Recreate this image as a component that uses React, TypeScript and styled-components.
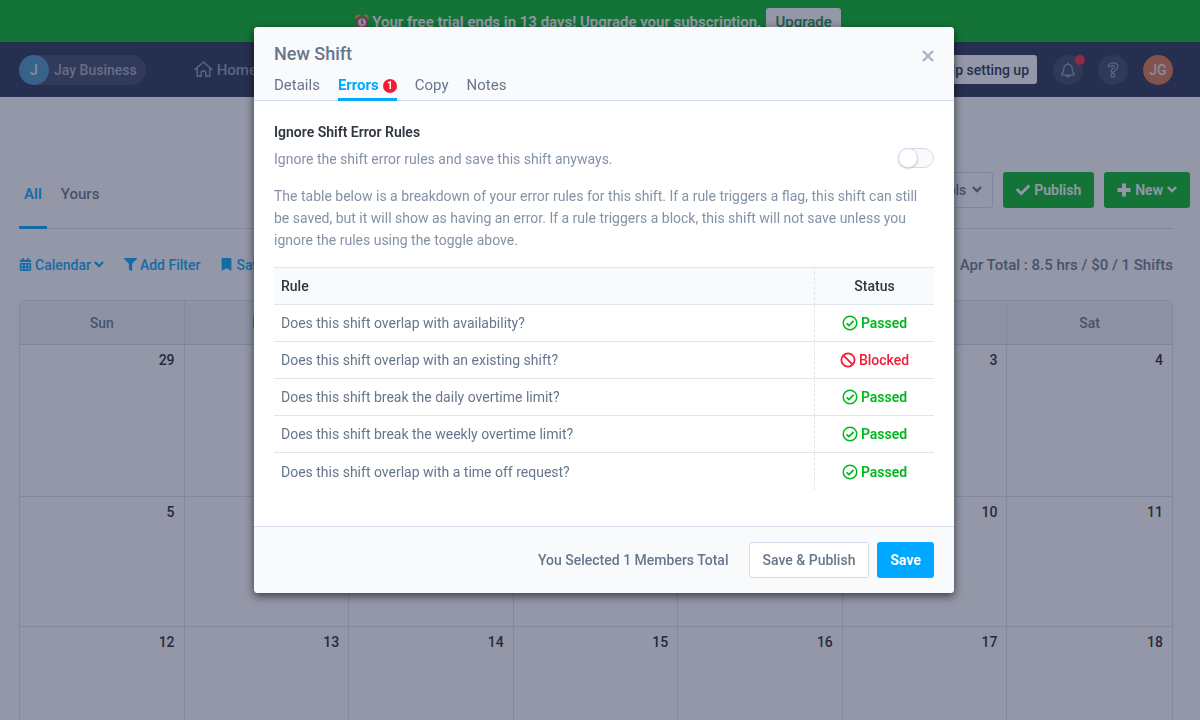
import React from "react";
import styled, { createGlobalStyle, css } from "styled-components";
import { FaBookmark, FaCalendarAlt, FaCheck, FaFilter } from "react-icons/fa";

const color = {
  green: "#00b81e",
  navy: "#252e4f",
  blue: "#00a8ff",
  red: "#f41c34",
  slate: "#67768c",
  ink: "#2f3640",
  muted: "#8492a6",
  line: "#d3dce9",
};

const GlobalStyle = createGlobalStyle`
  *, *::before, *::after { box-sizing: border-box; }
  body {
    margin: 0;
    background: #fff;
    color: ${color.slate};
    font-family: Roboto, "Liberation Sans", sans-serif;
    font-size: 14px;
    line-height: 22px;
  }
  button, input { font: inherit; color: inherit; }
  button { cursor: pointer; }
  a { color: inherit; text-decoration: none; }
  svg { flex: none; }
`;

const Screen = styled.div`
  display: flex;
  flex-direction: column;
  height: 100vh;
  overflow: hidden;
`;

/* ---------- Banner ---------- */

const Banner = styled.div`
  display: flex;
  flex: none;
  align-items: center;
  justify-content: center;
  gap: 5px;
  height: 42px;
  padding: 2px 4px 0 0;
  background: ${color.green};
  color: #fff;
  font-size: 15px;
  font-weight: 600;
`;

const BannerMessage = styled.span`
  display: flex;
  align-items: center;
  gap: 3px;
`;

const UpgradeButton = styled.button`
  height: 28px;
  padding: 0 9px;
  border: 0;
  border-radius: 3px;
  background: #fff;
  color: #0f8a3c;
  font-weight: 500;
`;

/* ---------- Navigation ---------- */

const NavBar = styled.header`
  display: flex;
  flex: none;
  align-items: center;
  height: 55px;
  padding: 0 27px 0 19px;
  background: ${color.navy};
`;

const Workspace = styled.a`
  display: flex;
  align-items: center;
  gap: 5px;
  height: 30px;
  margin-right: 48px;
  padding-right: 9px;
  border-radius: 15px;
  background: #3c4566;
  color: #a3aabd;
  font-weight: 500;
`;

const Avatar = styled.span<{ $tone: string }>`
  display: flex;
  align-items: center;
  justify-content: center;
  width: 30px;
  height: 30px;
  border-radius: 50%;
  background: ${(p) => p.$tone};
  color: #e3e7f0;
  font-size: 14px;
  font-weight: 500;
`;

const NavLink = styled.a`
  display: flex;
  align-items: center;
  gap: 4px;
  color: #8f9ab5;
  font-size: 15px;
  font-weight: 500;
`;

const NavActions = styled.div`
  display: flex;
  align-items: center;
  gap: 15px;
  margin-left: auto;
`;

const HelpButton = styled.button`
  height: 29px;
  margin-right: 1px;
  padding: 0 8px;
  border: 0;
  border-radius: 3px;
  background: #fff;
  color: ${color.navy};
  font-weight: 500;
`;

const RoundButton = styled.button`
  position: relative;
  display: flex;
  align-items: center;
  justify-content: center;
  width: 30px;
  height: 30px;
  padding: 0;
  border: 0;
  border-radius: 50%;
  background: #3a4363;
  color: #8f9ab5;
`;

const AlertDot = styled.span`
  position: absolute;
  top: 0;
  right: -2px;
  width: 10px;
  height: 10px;
  border-radius: 50%;
  background: #f5263f;
`;

/* ---------- Schedule page ---------- */

const Page = styled.main`
  flex: 1;
  min-height: 0;
  padding: 75px 27px 0 19px;
  overflow: hidden;
`;

const TabRow = styled.div`
  display: flex;
  justify-content: space-between;
  height: 57px;
  border-bottom: 1px solid #dbe2ed;
`;

const PageTabs = styled.nav`
  display: flex;
  gap: 9px;
`;

const PageTab = styled.a<{ $active?: boolean }>`
  height: 57px;
  padding: 11px 5px 0;
  border-bottom: 3px solid ${(p) => (p.$active ? color.blue : "transparent")};
  color: ${(p) => (p.$active ? color.blue : color.slate)};
  font-size: 15px;
  font-weight: ${(p) => (p.$active ? 600 : 500)};
`;

const PageActions = styled.div`
  display: flex;
  gap: 10px;
  margin-right: -17px;
`;

const Button = styled.button<{ $kind?: "primary" | "success" | "plain" }>`
  display: flex;
  align-items: center;
  gap: 4px;
  height: 36px;
  padding: 0 13px;
  border: 0;
  border-radius: 3px;
  font-weight: 500;
  ${(p) =>
    p.$kind === "primary"
      ? css`
          background: ${color.blue};
          color: #fff;
          font-weight: 700;
        `
      : p.$kind === "success"
        ? css`
            background: ${color.green};
            color: #fff;
            font-weight: 600;
          `
        : css`
            border: 1px solid ${color.line};
            background: #fff;
          `}
`;

const MenuButton = styled(Button)`
  gap: 6px;
  padding: 0 10px;
`;

const FilterRow = styled.div`
  display: flex;
  align-items: center;
  justify-content: space-between;
  height: 71px;
`;

const Filters = styled.div`
  display: flex;
  gap: 20px;
`;

const FilterButton = styled.button`
  display: flex;
  align-items: center;
  gap: 3px;
  padding: 0;
  border: 0;
  background: none;
  color: ${color.blue};
  font-weight: 500;
`;

const Total = styled.span`
  font-size: 15px;
  font-weight: 500;
`;

const Calendar = styled.table`
  width: 100%;
  table-layout: fixed;
  border-collapse: separate;
  border-spacing: 0;
  border: 1px solid #dbe2ed;
  border-radius: 4px;
  overflow: hidden;
`;

const DayHead = styled.th`
  height: 44px;
  padding: 0;
  border-bottom: 1px solid #d3dbe6;
  background: #f3f7f9;
  font-weight: 500;
  &:not(:last-child) {
    border-right: 1px solid #dbe2ed;
  }
`;

const DayCell = styled.td<{ $tall?: boolean }>`
  height: ${(p) => (p.$tall ? 152 : 130)}px;
  padding: 4px 9px;
  border-bottom: 1px solid #dbe2ed;
  color: #1f2530;
  font-weight: 500;
  text-align: right;
  vertical-align: top;
  &:not(:last-child) {
    border-right: 1px solid #dbe2ed;
  }
`;

/* ---------- Modal ---------- */

const Overlay = styled.div`
  position: fixed;
  inset: 0;
  display: flex;
  align-items: flex-start;
  justify-content: center;
  padding: 27px 0 27px 8px;
  background: rgba(39, 47, 80, 0.5);
`;

const Modal = styled.section`
  width: 100%;
  max-width: 700px;
  border-radius: 4px;
  background: #fff;
  box-shadow: 0 3px 10px rgba(0, 0, 0, 0.6);
  overflow: hidden;
`;

const ModalHeader = styled.header`
  padding: 14px 20px 0;
  border-bottom: 1px solid ${color.line};
  background: #f9fafc;
`;

const TitleRow = styled.div`
  display: flex;
  align-items: center;
  justify-content: space-between;
  height: 26px;
`;

const Title = styled.h2`
  margin: 0;
  font-size: 18px;
  font-weight: 500;
`;

const CloseButton = styled.button`
  display: flex;
  padding: 4px 0 0;
  border: 0;
  background: none;
  color: #abb4c4;
`;

const ModalTabs = styled.nav`
  display: flex;
  gap: 18px;
  margin-bottom: -1px;
`;

const ModalTab = styled.a<{ $active?: boolean }>`
  display: flex;
  gap: 4px;
  height: 34px;
  padding-top: 7px;
  border-bottom: 3px solid ${(p) => (p.$active ? color.blue : "transparent")};
  color: ${(p) => (p.$active ? color.blue : color.slate)};
  font-size: 15px;
  font-weight: ${(p) => (p.$active ? 700 : 400)};
`;

const Count = styled.span`
  width: 14px;
  height: 14px;
  margin-top: 5px;
  border-radius: 50%;
  background: ${color.red};
  color: #fff;
  font-size: 10px;
  line-height: 14px;
  text-align: center;
`;

const ModalBody = styled.div`
  padding: 20px 20px 36px;
`;

const Setting = styled.div`
  display: flex;
  align-items: flex-end;
  justify-content: space-between;
  margin-bottom: 15px;
`;

const SettingTitle = styled.h3`
  margin: 0 0 5px;
  color: ${color.ink};
  font-size: 14px;
  font-weight: 600;
  line-height: 22px;
`;

const HelpText = styled.p`
  margin: 0;
  color: ${color.muted};
`;

const Switch = styled.input`
  appearance: none;
  display: flex;
  width: 36px;
  height: 20px;
  margin: 0 0 2px;
  border: 1px solid ${color.line};
  border-radius: 10px;
  background: #fafafa;
  cursor: pointer;
  &::before {
    content: "";
    width: 20px;
    height: 20px;
    margin: -1px;
    border: 1px solid ${color.line};
    border-radius: 50%;
    background: #fff;
    box-shadow: 0 1px 2px rgba(60, 80, 110, 0.25);
  }
  &:checked {
    justify-content: flex-end;
    background: ${color.blue};
  }
`;

const Rules = styled.table`
  width: 100%;
  margin-top: 16px;
  border-collapse: separate;
  border-spacing: 0;
`;

const RuleHead = styled.th<{ $status?: boolean }>`
  height: 38px;
  padding: 0 7px;
  border: solid #e0e6ed;
  border-width: 1px 0;
  background: #f9fafc;
  color: ${color.ink};
  font-weight: 500;
  text-align: left;
  ${(p) =>
    p.$status &&
    css`
      width: 120px;
      border-left: 1px dashed #e0e6ed;
      text-align: center;
    `}
`;

const RuleCell = styled.td<{ $status?: boolean }>`
  height: 37px;
  padding: 0 7px;
  border-bottom: 1px solid #e0e6ed;
  tr:last-child > & {
    border-bottom: 0;
  }
  ${(p) =>
    p.$status &&
    css`
      border-left: 1px dashed #e0e6ed;
    `}
`;

const Status = styled.span<{ $blocked?: boolean }>`
  display: flex;
  align-items: center;
  justify-content: center;
  gap: 3px;
  color: ${(p) => (p.$blocked ? color.red : color.green)};
  font-weight: ${(p) => (p.$blocked ? 500 : 600)};
`;

const ModalFooter = styled.footer`
  display: flex;
  align-items: center;
  justify-content: flex-end;
  gap: 8px;
  padding: 15px 20px;
  border-top: 1px solid ${color.line};
  background: #f9fafc;
`;

const Selection = styled.span`
  margin-right: 12px;
  font-weight: 500;
`;

/* ---------- Icons ---------- */

const HomeIcon = () => (
  <svg width="19" height="17" viewBox="0 0 19 17" fill="none" stroke="currentColor" strokeWidth="1.5" strokeLinecap="round" strokeLinejoin="round" aria-hidden="true">
    <path d="M1 8.5 9.5 1 18 8.5" />
    <path d="M3.2 7v8.2h4V12a2.3 2.3 0 0 1 4.6 0v3.2h4V7" />
  </svg>
);

const BellIcon = () => (
  <svg width="16" height="16" viewBox="0 0 16 16" fill="none" stroke="currentColor" strokeWidth="1.3" strokeLinecap="round" strokeLinejoin="round" aria-hidden="true">
    <path d="M8 .9v1.4" />
    <path d="M8 2.3a4.2 4.2 0 0 0-4.2 4.2c0 3.4-1 4.7-2 5.4-.5.5-.2 1.2.4 1.2h11.6c.6 0 .9-.7.4-1.2-1-.7-2-2-2-5.4A4.2 4.2 0 0 0 8 2.3Z" />
    <path d="M6.4 13.3a1.6 1.6 0 0 0 3.2 0" />
  </svg>
);

const QuestionIcon = () => (
  <svg width="12" height="16" viewBox="0 0 12 16" fill="none" stroke="currentColor" strokeWidth="1.2" strokeLinejoin="round" aria-hidden="true">
    <path d="M6 .8C3.8.8 2.3 1.7 1.2 3.3c-.2.3-.1.6.1.8l1.2.9c.3.2.6.1.8-.1.7-.9 1.300-1.500 2.500-1.500.9 0 1.800.5 1.800 1.300 0 .8-.6 1.100-1.500 1.700C5 7 4.300 7.800 4.300 9.300v.3c0 .3.2.5.5.5h1.900c.3 0 .5-.2.5-.5 0-1.900 3.700-1.600 3.700-5.100C10.900 2.300 8.500.8 6 .8Z" />
    <circle cx="5.800" cy="13.200" r="1.900" />
  </svg>
);

const AlarmIcon = () => (
  <svg width="14" height="16" viewBox="0 0 14 16" aria-hidden="true">
    <path d="M2.5 13.500 1.200 15.400M11.500 13.500l1.300 1.900" stroke="#8b3a4a" strokeWidth="1.5" />
    <path d="M.6 5a3.200 3.200 0 0 1 4.900-3.800ZM13.400 5a3.200 3.200 0 0 0-4.900-3.800Z" fill="#f0a030" />
    <circle cx="7" cy="8.500" r="6" fill="#e8305e" />
    <circle cx="7" cy="8.500" r="4" fill="#f3f0f5" />
    <path d="M7 5.500v3.300l1.200 1" stroke="#333a55" strokeWidth="1.2" fill="none" />
  </svg>
);

const CloseIcon = () => (
  <svg width="12" height="12" viewBox="0 0 12 12" stroke="currentColor" strokeWidth="2.4" aria-hidden="true">
    <path d="M1 1l10 10M11 1 1 11" />
  </svg>
);

const ChevronIcon = () => (
  <svg width="10" height="10" viewBox="0 0 10 10" fill="none" stroke="currentColor" strokeWidth="2.4" aria-hidden="true">
    <path d="M.9 2 5 6.100 9.100 2" />
  </svg>
);

const PlusIcon = () => (
  <svg width="14" height="14" viewBox="0 0 14 14" stroke="currentColor" strokeWidth="4" aria-hidden="true">
    <path d="M7 .5v13M.5 7h13" />
  </svg>
);

const PassedIcon = () => (
  <svg width="16" height="16" viewBox="0 0 16 16" fill="none" stroke="currentColor" strokeWidth="1.5" aria-hidden="true">
    <circle cx="8" cy="8" r="6.800" />
    <path d="M4.600 8.400 7 10.600 11.600 5.900" strokeWidth="1.8" />
  </svg>
);

const BlockedIcon = () => (
  <svg width="16" height="16" viewBox="0 0 16 16" fill="none" stroke="currentColor" strokeWidth="1.8" aria-hidden="true">
    <circle cx="8" cy="8" r="6.600" />
    <path d="M3.300 3.300l9.400 9.400" />
  </svg>
);

/* ---------- Data ---------- */

const days = ["Sun", "Mon", "Tue", "Wed", "Thu", "Fri", "Sat"];

const weeks = [
  [29, 30, 31, 1, 2, 3, 4],
  [5, 6, 7, 8, 9, 10, 11],
  [12, 13, 14, 15, 16, 17, 18],
];

const rules = [
  { text: "Does this shift overlap with availability?", blocked: false },
  { text: "Does this shift overlap with an existing shift?", blocked: true },
  { text: "Does this shift break the daily overtime limit?", blocked: false },
  { text: "Does this shift break the weekly overtime limit?", blocked: false },
  { text: "Does this shift overlap with a time off request?", blocked: false },
];

export default function App() {
  return (
    <Screen>
      <GlobalStyle />
      <Banner>
        <BannerMessage>
          <AlarmIcon />
          Your free trial ends in 13 days! Upgrade your subscription.
        </BannerMessage>
        <UpgradeButton>Upgrade</UpgradeButton>
      </Banner>
      <NavBar>
        <Workspace href="#business">
          <Avatar $tone="#4795c3">J</Avatar>
          Jay Business
        </Workspace>
        <NavLink href="#home">
          <HomeIcon />
          Home
        </NavLink>
        <NavActions>
          <HelpButton>Help setting up</HelpButton>
          <RoundButton aria-label="Notifications">
            <BellIcon />
            <AlertDot />
          </RoundButton>
          <RoundButton aria-label="Help">
            <QuestionIcon />
          </RoundButton>
          <Avatar $tone="#e07448">JG</Avatar>
        </NavActions>
      </NavBar>

      <Page>
        <TabRow>
          <PageTabs>
            <PageTab href="#all" $active>All</PageTab>
            <PageTab href="#yours">Yours</PageTab>
          </PageTabs>
          <PageActions>
            <MenuButton>
              Tools <ChevronIcon />
            </MenuButton>
            <Button $kind="success">
              <FaCheck size={14} /> Publish
            </Button>
            <Button $kind="success">
              <PlusIcon /> New <ChevronIcon />
            </Button>
          </PageActions>
        </TabRow>
        <FilterRow>
          <Filters>
            <FilterButton>
              <FaCalendarAlt size={13} /> Calendar <ChevronIcon />
            </FilterButton>
            <FilterButton>
              <FaFilter size={13} /> Add Filter
            </FilterButton>
            <FilterButton>
              <FaBookmark size={13} /> Save
            </FilterButton>
          </Filters>
          <Total>Apr Total : 8.5 hrs / $0 / 1 Shifts</Total>
        </FilterRow>
        <Calendar>
          <thead>
            <tr>
              {days.map((day) => (
                <DayHead key={day}>{day}</DayHead>
              ))}
            </tr>
          </thead>
          <tbody>
            {weeks.map((week, index) => (
              <tr key={week[0]}>
                {week.map((date) => (
                  <DayCell key={date} $tall={index === 0}>
                    {date}
                  </DayCell>
                ))}
              </tr>
            ))}
          </tbody>
        </Calendar>
      </Page>

      <Overlay>
        <Modal role="dialog" aria-modal="true" aria-labelledby="shift-title">
          <ModalHeader>
            <TitleRow>
              <Title id="shift-title">New Shift</Title>
              <CloseButton aria-label="Close">
                <CloseIcon />
              </CloseButton>
            </TitleRow>
            <ModalTabs>
              <ModalTab href="#details">Details</ModalTab>
              <ModalTab href="#errors" $active>
                Errors <Count>1</Count>
              </ModalTab>
              <ModalTab href="#copy">Copy</ModalTab>
              <ModalTab href="#notes">Notes</ModalTab>
            </ModalTabs>
          </ModalHeader>
          <ModalBody>
            <Setting>
              <label htmlFor="ignore-rules">
                <SettingTitle>Ignore Shift Error Rules</SettingTitle>
                <HelpText>Ignore the shift error rules and save this shift anyways.</HelpText>
              </label>
              <Switch id="ignore-rules" type="checkbox" />
            </Setting>
            <HelpText>
              The table below is a breakdown of your error rules for this shift. If a rule triggers a flag, this shift can
              still be saved, but it will show as having an error. If a rule triggers a block, this shift will not save
              unless you ignore the rules using the toggle above.
            </HelpText>
            <Rules>
              <thead>
                <tr>
                  <RuleHead>Rule</RuleHead>
                  <RuleHead $status>Status</RuleHead>
                </tr>
              </thead>
              <tbody>
                {rules.map((rule) => (
                  <tr key={rule.text}>
                    <RuleCell>{rule.text}</RuleCell>
                    <RuleCell $status>
                      <Status $blocked={rule.blocked}>
                        {rule.blocked ? <BlockedIcon /> : <PassedIcon />}
                        {rule.blocked ? "Blocked" : "Passed"}
                      </Status>
                    </RuleCell>
                  </tr>
                ))}
              </tbody>
            </Rules>
          </ModalBody>
          <ModalFooter>
            <Selection>You Selected 1 Members Total</Selection>
            <Button>Save &amp; Publish</Button>
            <Button $kind="primary">Save</Button>
          </ModalFooter>
        </Modal>
      </Overlay>
    </Screen>
  );
}
